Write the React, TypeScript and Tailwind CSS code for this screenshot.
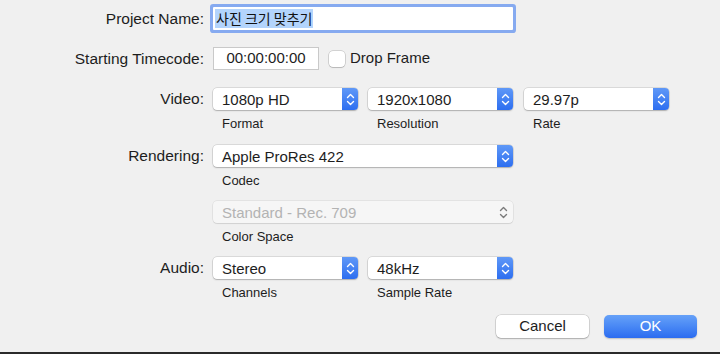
import React from "react";

const font = { fontFamily: '"Liberation Sans", Arial, sans-serif' };

function Chevrons({ color }: { color: string }) {
  return (
    <svg width="9" height="15" viewBox="0 0 9 15" fill="none">
      <path d="M1.5 5.5 L4.5 2.5 L7.5 5.5" stroke={color} strokeWidth="1.4" strokeLinecap="round" strokeLinejoin="round" />
      <path d="M1.5 9.5 L4.5 12.5 L7.5 9.5" stroke={color} strokeWidth="1.4" strokeLinecap="round" strokeLinejoin="round" />
    </svg>
  );
}

function Popup({ value, width }: { value: string; width: string }) {
  return (
    <div className={`${width} h-[22px] flex bg-white rounded-[4px] shadow-[0_0_0_0.5px_rgba(0,0,0,0.18),0_1px_1.5px_rgba(0,0,0,0.2)]`}>
      <div className="flex-1 flex items-center pl-[9px] text-[15px] text-[#1d1d1d] leading-none">{value}</div>
      <div className="w-[16px] h-full rounded-r-[4px] bg-gradient-to-b from-[#5f98f7] to-[#2d6ef0] flex items-center justify-center">
        <Chevrons color="#ffffff" />
      </div>
    </div>
  );
}

function DisabledPopup({ value, width }: { value: string; width: string }) {
  return (
    <div className={`${width} h-[22px] flex bg-[#f6f6f6] rounded-[4px] shadow-[0_0_0_0.5px_rgba(0,0,0,0.1),0_1px_1px_rgba(0,0,0,0.08)]`}>
      <div className="flex-1 flex items-center pl-[9px] text-[15px] text-[#b3b3b3] leading-none">{value}</div>
      <div className="w-[16px] h-full flex items-center justify-center mr-[2px]">
        <Chevrons color="#7a7a7a" />
      </div>
    </div>
  );
}

function Sub({ children }: { children: React.ReactNode }) {
  return <div className="mt-[4px] h-[16px] pl-[9px] text-[13px] leading-[19px] text-[#1d1d1d]">{children}</div>;
}

function Label({ children }: { children: React.ReactNode }) {
  return (
    <div className="w-[204px] text-right text-[15.5px] text-[#1d1d1d] h-[22px] leading-[22px] shrink-0">{children}</div>
  );
}

export default function App() {
  return (
    <div className="w-[720px] h-[354px] bg-[#f0f0f0] flex flex-col overflow-hidden" style={font}>
      {/* Project name */}
      <div className="flex items-center mt-[7px] h-[23px]">
        <Label>Project Name:</Label>
        <div className="ml-[9px] w-[300px] h-[23px] bg-white rounded-[1px] shadow-[0_0_0_3px_#86aaf0] flex items-center pl-[2px]">
          <span
            className="bg-[#b3d4fc] text-[14px] leading-[19px] px-[1px] text-[#111]"
            style={{ fontFamily: '"Noto Sans CJK KR", "Liberation Sans", sans-serif' }}
          >
            사진 크기 맞추기
          </span>
        </div>
      </div>

      {/* Timecode */}
      <div className="flex items-center mt-[17px] h-[23px]">
        <Label>Starting Timecode:</Label>
        <div className="ml-[9px] w-[106px] h-[23px] bg-white border border-[#c9c9c9] flex items-center justify-center text-[15px] text-[#1d1d1d]">
          00:00:00:00
        </div>
        <div className="ml-[10px] w-[16px] h-[16px] bg-white rounded-[4px] shadow-[0_0_0_0.5px_rgba(0,0,0,0.25),0_1px_1px_rgba(0,0,0,0.12)]" />
        <div className="ml-[5px] text-[15px] text-[#1d1d1d]">Drop Frame</div>
      </div>

      {/* Video */}
      <div className="flex mt-[18px]">
        <Label>Video:</Label>
        <div className="ml-[9px] flex gap-[10px]">
          <div>
            <Popup value="1080p HD" width="w-[145px]" />
            <Sub>Format</Sub>
          </div>
          <div>
            <Popup value="1920x1080" width="w-[145px]" />
            <Sub>Resolution</Sub>
          </div>
          <div className="ml-[1px]">
            <Popup value="29.97p" width="w-[145px]" />
            <Sub>Rate</Sub>
          </div>
        </div>
      </div>

      {/* Rendering */}
      <div className="flex mt-[15px]">
        <Label>Rendering:</Label>
        <div className="ml-[9px]">
          <Popup value="Apple ProRes 422" width="w-[300px]" />
          <Sub>Codec</Sub>
        </div>
      </div>

      {/* Color space */}
      <div className="flex mt-[14px]">
        <Label>{""}</Label>
        <div className="ml-[9px]">
          <DisabledPopup value="Standard - Rec. 709" width="w-[300px]" />
          <Sub>Color Space</Sub>
        </div>
      </div>

      {/* Audio */}
      <div className="flex mt-[14px]">
        <Label>Audio:</Label>
        <div className="ml-[9px] flex gap-[10px]">
          <div>
            <Popup value="Stereo" width="w-[145px]" />
            <Sub>Channels</Sub>
          </div>
          <div>
            <Popup value="48kHz" width="w-[145px]" />
            <Sub>Sample Rate</Sub>
          </div>
        </div>
      </div>

      {/* Buttons */}
      <div className="flex mt-[16px] pl-[496px] gap-[15px]">
        <div className="w-[93px] h-[23px] bg-white rounded-[5px] shadow-[0_0_0_0.5px_rgba(0,0,0,0.2),0_1px_1.5px_rgba(0,0,0,0.2)] flex items-center justify-center text-[15px] text-[#1d1d1d]">
          Cancel
        </div>
        <div className="w-[93px] h-[23px] rounded-[5px] bg-gradient-to-b from-[#66a1f8] to-[#2c6cf0] shadow-[0_1px_1.5px_rgba(0,0,0,0.2)] flex items-center justify-center text-[15px] text-white">
          OK
        </div>
      </div>

      <div className="flex-1" />
      <div className="h-[2px] bg-[#2a2a2a]" />
    </div>
  );
}
